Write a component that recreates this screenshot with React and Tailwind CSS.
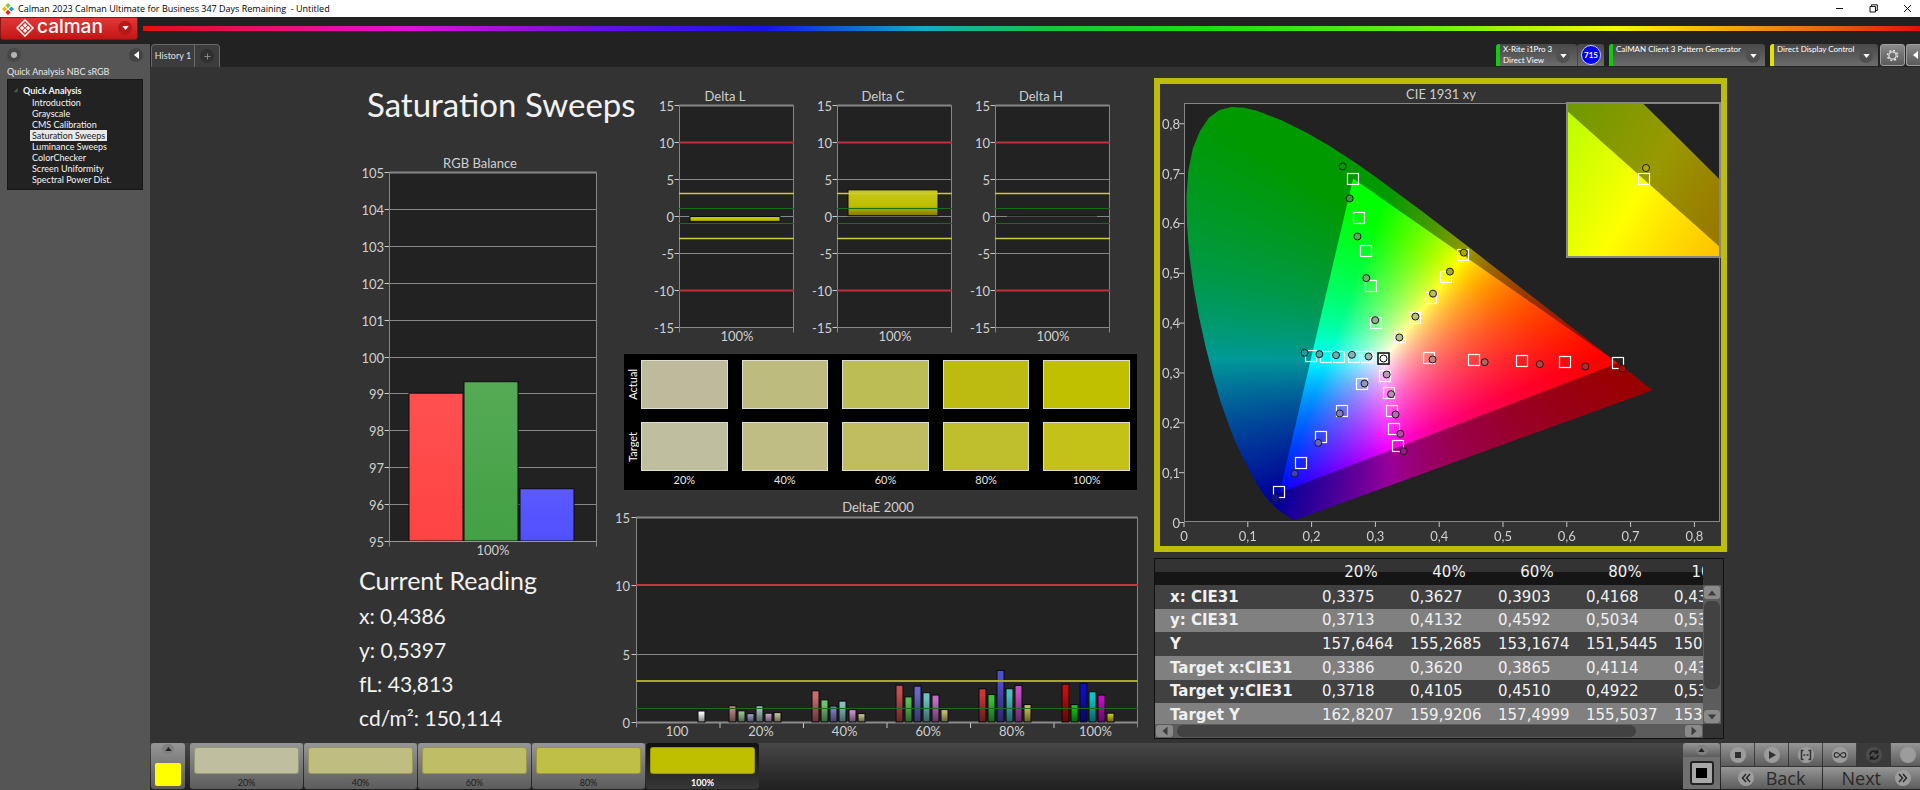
import React, { useLayoutEffect, useRef } from "react";

/* ---------- shared chart helpers ---------- */

const AXIS = "#868686";
const LABEL = "#cfcfcf";

function ChartText({ children, ...rest }) {
  return (
    <text fill={LABEL} className="font-['Lato',sans-serif] text-[13px]" {...rest}>
      {children}
    </text>
  );
}

function Frame({ x0, x1, y0, y1, min, max, step, labelX }) {
  const rows = [];
  for (let v = min; v <= max; v += step) {
    rows.push({ v, y: Math.floor(y1 - ((v - min) / (max - min)) * (y1 - y0)) + 0.5 });
  }
  return (
    <g>
      <rect x={x0} y={y0} width={x1 - x0} height={y1 - y0} fill="#222222" />
      {rows.map(({ v, y }) => (
        <g key={v}>
          <line x1={x0} x2={x1} y1={y} y2={y} stroke={AXIS} strokeWidth={v === max ? 2 : 1} />
          <line x1={x0 - 5} x2={x0} y1={y} y2={y} stroke="#c8c8c8" strokeWidth="1" />
          <ChartText x={labelX} y={y + 5} textAnchor="end">{v}</ChartText>
        </g>
      ))}
      <line x1={x0} x2={x0} y1={y0} y2={y1 + 5} stroke={AXIS} strokeWidth="1" />
      <line x1={x1} x2={x1} y1={y0} y2={y1 + 5} stroke={AXIS} strokeWidth="1" />
    </g>
  );
}

/* ---------- RGB balance ---------- */

function RgbBalance() {
  const y = (v) => 387.5 - (v - 95) * 36.9;
  const bars = [
    { x: 50, v: 99.02, top: "#ff5050", bottom: "#ff4343" },
    { x: 105, v: 99.33, top: "#55ab55", bottom: "#43a043" },
    { x: 161, v: 96.43, top: "#5a5aff", bottom: "#5050ff" },
  ];
  return (
    <svg viewBox="0 0 252 408" className="block w-full" role="img" aria-label="RGB Balance">
      <defs>
        {bars.map((b, i) => (
          <linearGradient key={i} id={`rgb${i}`} x1="0" y1="0" x2="0" y2="1">
            <stop offset="0" stopColor={b.top} />
            <stop offset="1" stopColor={b.bottom} />
          </linearGradient>
        ))}
      </defs>
      <ChartText x="121" y="14" textAnchor="middle">RGB Balance</ChartText>
      <Frame x0={30.5} x1={237.5} y0={18.5} y1={387.5} min={95} max={105} step={1} labelX={25} />
      {bars.map((b, i) => (
        <rect key={i} x={b.x} y={y(b.v)} width="54" height={387 - y(b.v)} fill={`url(#rgb${i})`} stroke="#0a0a0a" />
      ))}
      <line x1="30" x2="238" y1="387.5" y2="387.5" stroke="#999999" strokeWidth="1" />
      <ChartText x="134" y="401" textAnchor="middle">100%</ChartText>
    </svg>
  );
}

/* ---------- Delta L / C / H ---------- */

function DeltaChart({ title, from, to }) {
  const y = (v) => 128.5 - v * 7.4;
  const limits = [
    [10, "#c03038", 2], [3, "#cccc3c", 1.5], [1, "#157015", 1],
    [-1, "#157015", 1], [-3, "#cccc3c", 1.5], [-10, "#c03038", 2],
  ];
  const height = Math.max(y(from) - y(to), 1);
  return (
    <svg viewBox="0 0 158 258" className="block min-w-0 flex-1" role="img" aria-label={title}>
      <defs>
        <linearGradient id={`bar${title.slice(-1)}`} x1="0" y1="0" x2="0" y2="1">
          <stop offset="0" stopColor="#c8c81c" />
          <stop offset="0.6" stopColor="#bfbf00" />
          <stop offset="1" stopColor="#7c7c00" />
        </linearGradient>
      </defs>
      <ChartText x="76" y="13" textAnchor="middle">{title}</ChartText>
      <Frame x0={30.5} x1={144.5} y0={17.5} y1={239.5} min={-15} max={15} step={5} labelX={25} />
      {height > 1 ? (
        <rect x="41" y={y(to)} width="90" height={height} fill={`url(#bar${title.slice(-1)})`} stroke="#0a0a0a" />
      ) : (
        <line x1="42" x2="132" y1="128" y2="128" stroke="#0a0a0a" />
      )}
      {limits.map(([v, color, w]) => (
        <line key={v} x1="30" x2="145" y1={Math.round(y(v)) - 0.5} y2={Math.round(y(v)) - 0.5} stroke={color} strokeWidth={w} />
      ))}
      <ChartText x="88" y="253" textAnchor="middle">100%</ChartText>
    </svg>
  );
}

/* ---------- Actual / target swatches ---------- */

const LEVELS = ["20%", "40%", "60%", "80%", "100%"];

function SwatchRow({ name, colors }) {
  return (
    <div className="flex items-center">
      <div className="flex w-[17px] shrink-0 items-center justify-center">
        <span className="rotate-180 text-[11px] leading-[14px] text-white [writing-mode:vertical-rl]">{name}</span>
      </div>
      <div className="grid flex-1 grid-cols-5 gap-[14px]">
        {colors.map((c, i) => (
          <div key={i} className="h-[49px] border border-[#deded0]" style={{ backgroundColor: c }} />
        ))}
      </div>
    </div>
  );
}

function Swatches() {
  return (
    <div className="ml-[13px] mr-[4px] mt-[8px] flex flex-col gap-[13px] bg-black pb-[4px] pr-[7px] pt-[6px]">
      <SwatchRow name="Actual" colors={["#bdbb9c", "#bdbb7d", "#bdbd55", "#bdbb12", "#c1c000"]} />
      <div>
        <SwatchRow name="Target" colors={["#bfbe9f", "#bfbd84", "#bfbd60", "#bfbe2d", "#c4c119"]} />
        <div className="grid grid-cols-5 gap-[14px] pl-[17px] pt-[3px] text-center text-[11px] leading-[12px] text-[#e6e6e6]">
          {LEVELS.map((l) => <span key={l}>{l}</span>)}
        </div>
      </div>
    </div>
  );
}

/* ---------- DeltaE 2000 ---------- */

const DE_GROUPS = [
  { label: "20%", v: [1.22, 0.85, 0.65, 1.22, 0.68, 0.72], c: ["#bf8585", "#93bf93", "#9494bf", "#a0bfbb", "#bf9cbf", "#bfbb98"] },
  { label: "40%", v: [2.31, 1.65, 1.2, 1.56, 0.94, 0.65], c: ["#c86c70", "#72c076", "#7c7cc4", "#86c0be", "#c08cc4", "#c0bc84"] },
  { label: "60%", v: [2.72, 1.87, 2.65, 2.17, 2, 0.94], c: ["#c84f50", "#54c054", "#6868c8", "#6cc2c2", "#c46cc4", "#c0bc6c"] },
  { label: "80%", v: [2.46, 2.04, 3.8, 2.46, 2.7, 1.31], c: ["#c83638", "#38c038", "#5050cc", "#48c0c0", "#c44cc4", "#c0bc50"] },
  { label: "100%", v: [2.8, 1.31, 2.85, 2.24, 2, 0.68], c: ["#c40c0c", "#0cc40c", "#0c0ccc", "#0cc4c4", "#c40cc4", "#c4c018"] },
];

function DeltaE() {
  const y = (v) => 223.5 - v * 13.72;
  return (
    <svg viewBox="0 0 530 244" className="mt-[9px] block w-full" role="img" aria-label="DeltaE 2000">
      <defs>
        <linearGradient id="shade" x1="0" y1="0" x2="0" y2="1">
          <stop offset="0.2" stopColor="#000" stopOpacity="0" />
          <stop offset="1" stopColor="#000" stopOpacity="0.5" />
        </linearGradient>
      </defs>
      <ChartText x="267" y="13" textAnchor="middle">DeltaE 2000</ChartText>
      <Frame x0={25.5} x1={526.5} y0={18.5} y1={223.5} min={0} max={15} step={5} labelX={19} />
      <line x1="25" x2="527" y1="223.5" y2="223.5" stroke="#8c8c8c" strokeWidth="2" />
      {[1, 2, 3, 4, 5].map((i) => (
        <line key={i} x1={25.5 + i * 83.5} x2={25.5 + i * 83.5} y1="224" y2="229" stroke="#c8c8c8" />
      ))}
      <rect x="87" y="212" width="7" height="11" fill="#f4f4f4" stroke="#0a0a0a" />
      <rect x="87" y="212" width="7" height="11" fill="url(#shade)" />
      <ChartText x="66" y="237" textAnchor="middle">100</ChartText>
      {DE_GROUPS.map((g, gi) => (
        <g key={g.label}>
          {g.v.map((v, i) => {
            const x = Math.round(118 + gi * 83.3 + i * 9.05);
            return (
              <g key={i}>
                <rect x={x} y={y(v)} width="7" height={223 - y(v)} fill={g.c[i]} stroke="#0a0a0a" />
                <rect x={x} y={y(v)} width="7" height={223 - y(v)} fill="url(#shade)" />
              </g>
            );
          })}
          <ChartText x={150 + gi * 83.6} y="237" textAnchor="middle">{g.label}</ChartText>
        </g>
      ))}
      <line x1="25" x2="527" y1="86" y2="86" stroke="#c03840" strokeWidth="2" />
      <line x1="25" x2="527" y1="182" y2="182" stroke="#a8a82c" strokeWidth="2" />
      <line x1="25" x2="527" y1="209.5" y2="209.5" stroke="#1c6a1c" strokeWidth="1" />
    </svg>
  );
}

/* ---------- CIE 1931 chromaticity ---------- */

const LOCUS = [
  [0.1741, 0.005], [0.1714, 0.0051], [0.1644, 0.0109], [0.1566, 0.0177], [0.144, 0.0297], [0.1355, 0.0399],
  [0.1241, 0.0578], [0.1096, 0.0868], [0.0913, 0.1327], [0.0796, 0.1648], [0.0687, 0.2007], [0.0566, 0.2454],
  [0.0454, 0.295], [0.0339, 0.3519], [0.0235, 0.4127], [0.0145, 0.4758], [0.0082, 0.5384], [0.0046, 0.598],
  [0.0039, 0.6548], [0.0068, 0.7065], [0.0139, 0.7502], [0.0248, 0.7848], [0.0389, 0.812], [0.0557, 0.8278],
  [0.0743, 0.8338], [0.0944, 0.8324], [0.1142, 0.8262], [0.1547, 0.8059], [0.1929, 0.7816], [0.2296, 0.7543],
  [0.2658, 0.7243], [0.3016, 0.6923], [0.3731, 0.6245], [0.4441, 0.5547], [0.5125, 0.4866], [0.5752, 0.4242],
  [0.627, 0.3725], [0.6658, 0.334], [0.6915, 0.3083], [0.719, 0.2809], [0.7347, 0.2653],
];
const GAMUT = [[0.68, 0.32], [0.265, 0.69], [0.15, 0.06]];

const TARGETS = [
  [0.265, 0.69], [0.274, 0.611], [0.2846, 0.5455], [0.2928, 0.4755], [0.3014, 0.401],
  [0.3386, 0.3718], [0.362, 0.4105], [0.3865, 0.451], [0.4114, 0.4922], [0.4372, 0.5363],
  [0.3843, 0.3291], [0.4539, 0.3264], [0.5299, 0.3244], [0.5971, 0.3224], [0.68, 0.32],
  [0.2875, 0.3318], [0.2661, 0.332], [0.2435, 0.332], [0.2232, 0.332], [0.1994, 0.3331],
  [0.2788, 0.2776], [0.247, 0.2241], [0.2151, 0.1712], [0.1838, 0.1191], [0.1484, 0.0602],
  [0.3154, 0.2943], [0.3206, 0.2595], [0.3264, 0.2241], [0.3293, 0.1886], [0.3351, 0.1538],
];
const READINGS = [
  [0.2487, 0.7144, "#009900"], [0.2597, 0.6502, "#30a030"], [0.2719, 0.5739, "#55b055"], [0.2858, 0.4903, "#70b070"], [0.2997, 0.406, "#8cb08c"],
  [0.3375, 0.3713, "#bdbb9c"], [0.3627, 0.4132, "#bdbb7d"], [0.3903, 0.4592, "#bdbd55"], [0.4168, 0.5034, "#a8a834"], [0.4386, 0.5415, "#b0a800"],
  [0.3896, 0.3271, "#bf8585"], [0.4713, 0.3217, "#b86060"], [0.5577, 0.3177, "#b84444"], [0.629, 0.313, "#b02c2c"], [0.6875, 0.309, "#b00808"],
  [0.2893, 0.3331, "#9cb8b8"], [0.2632, 0.3365, "#86b4b4"], [0.2383, 0.3358, "#6cb0b0"], [0.2122, 0.3378, "#40b0b0"], [0.189, 0.3405, "#10a0a0"],
  [0.2829, 0.2789, "#9494bf"], [0.2441, 0.2187, "#7c7cc4"], [0.2104, 0.1599, "#6868c0"], [0.1733, 0.0983, "#4040a8"], [0.1432, 0.0495, "#1010a0"],
  [0.3177, 0.297, "#b89cb8"], [0.3246, 0.2575, "#b88cb8"], [0.3316, 0.2167, "#b86cb8"], [0.3391, 0.1779, "#b04cb0"], [0.3443, 0.1431, "#a010a0"],
];

function chromaToRgb(x, y) {
  const yy = Math.max(y, 0.001);
  const X = x / yy;
  const Z = (1 - x - yy) / yy;
  const lin = [
    3.2406 * X - 1.5372 - 0.4986 * Z,
    -0.9689 * X + 1.8758 + 0.0415 * Z,
    0.0557 * X - 0.204 + 1.057 * Z,
  ].map((c) => Math.max(c, 0));
  const peak = Math.max(...lin) || 1;
  return lin.map((c) => Math.round(255 * Math.pow(c / peak, 0.9)));
}

/* Paints the spectral locus; the part outside the gamut triangle is dimmed. */
function ChromaCanvas({ width, height, originX, originY, scaleX, scaleY }) {
  const ref = useRef(null);
  useLayoutEffect(() => {
    const ctx = ref.current.getContext("2d");
    const img = ctx.createImageData(width, height);
    for (let j = 0; j < height; j++) {
      for (let i = 0; i < width; i++) {
        const [r, g, b] = chromaToRgb((i - originX) / scaleX, (originY - j) / scaleY);
        const k = (j * width + i) * 4;
        img.data[k] = r;
        img.data[k + 1] = g;
        img.data[k + 2] = b;
        img.data[k + 3] = 255;
      }
    }
    ctx.putImageData(img, 0, 0);
    const trace = (pts) => {
      pts.forEach(([x, y], n) => {
        const px = originX + x * scaleX;
        const py = originY - y * scaleY;
        if (n) ctx.lineTo(px, py);
        else ctx.moveTo(px, py);
      });
      ctx.closePath();
    };
    ctx.globalCompositeOperation = "source-atop";
    ctx.fillStyle = "rgba(0,0,0,0.4)";
    ctx.beginPath();
    ctx.rect(0, 0, width, height);
    trace(GAMUT);
    ctx.fill("evenodd");
    ctx.globalCompositeOperation = "destination-in";
    ctx.fillStyle = "#000";
    ctx.beginPath();
    trace(LOCUS);
    ctx.fill();
  }, [width, height, originX, originY, scaleX, scaleY]);
  return <canvas ref={ref} width={width} height={height} className="block" />;
}

function CieChart() {
  const px = (x) => 24 + x * 638;
  const py = (y) => 438.5 - y * 498.4;
  const ticks = [0, 1, 2, 3, 4, 5, 6, 7, 8];
  const fmt = (t) => (t === 0 ? "0" : `0,${t}`);
  return (
    <div className="border-[6px] border-[#bdbd0a]">
      <svg viewBox="0 0 561 462" className="block w-full" role="img" aria-label="CIE 1931 xy">
        <ChartText x="281" y="15" textAnchor="middle">CIE 1931 xy</ChartText>
        <rect x="24.5" y="19.5" width="535" height="418" fill="#222222" stroke={AXIS} />
        <foreignObject x="25" y="20" width="534" height="417">
          <ChromaCanvas width={534} height={417} originX={-1} originY={418.5} scaleX={638} scaleY={498.4} />
        </foreignObject>
        {ticks.map((t) => (
          <g key={t}>
            <line x1={px(t / 10)} x2={px(t / 10)} y1="438" y2="443" stroke="#c8c8c8" />
            <line x1="19" x2="24" y1={py(t / 10)} y2={py(t / 10)} stroke="#c8c8c8" />
            <ChartText x={px(t / 10)} y="457" textAnchor="middle">{fmt(t)}</ChartText>
            <ChartText x="20" y={py(t / 10) + 5} textAnchor="end">{fmt(t)}</ChartText>
          </g>
        ))}
        {TARGETS.map(([x, y], i) => (
          <rect key={i} x={Math.round(px(x)) - 5.5} y={Math.round(py(y)) - 5.5} width="11" height="11" fill="none" stroke="#ffffff" strokeWidth="1.2" />
        ))}
        {READINGS.map(([x, y, c], i) => (
          <circle key={i} cx={px(x)} cy={py(y)} r="3.5" fill={c} stroke="#1a1a1a" />
        ))}
        <rect x={px(0.3127) - 5.5} y={py(0.329) - 5.5} width="11" height="11" fill="#fff" stroke="#000" strokeWidth="1.5" />
        <circle cx={px(0.3127)} cy={py(0.329)} r="3.5" fill="#fff" stroke="#000" />
        <rect x="407" y="19" width="153" height="154" fill="#222222" stroke={AXIS} strokeWidth="2" />
        <foreignObject x="408" y="20" width="151" height="152">
          <ChromaCanvas width={151} height={152} originX={76 - 0.4372 * 3000} originY={76 + 0.5363 * 3000} scaleX={3000} scaleY={3000} />
        </foreignObject>
        <rect x="478.5" y="89.5" width="11" height="11" fill="none" stroke="#ffffff" strokeWidth="1.2" />
        <circle cx="486" cy="84" r="3.5" fill="#b0a800" stroke="#1a1a1a" />
      </svg>
    </div>
  );
}

/* ---------- Data table ---------- */

const ROWS = [
  ["x: CIE31", "0,3375", "0,3627", "0,3903", "0,4168", "0,4386"],
  ["y: CIE31", "0,3713", "0,4132", "0,4592", "0,5034", "0,5397"],
  ["Y", "157,6464", "155,2685", "153,1674", "151,5445", "150,1140"],
  ["Target x:CIE31", "0,3386", "0,3620", "0,3865", "0,4114", "0,4372"],
  ["Target y:CIE31", "0,3718", "0,4105", "0,4510", "0,4922", "0,5363"],
  ["Target Y", "162,8207", "159,9206", "157,4999", "155,5037", "153,8210"],
];

function ScrollButton({ d, label, className }) {
  return (
    <button type="button" aria-label={label} className={`flex shrink-0 items-center justify-center rounded-[3px] bg-[#8a8a8a] ${className}`}>
      <svg viewBox="0 0 12 12" className="h-[10px] w-[10px]"><path d={d} fill="#3c3c3c" /></svg>
    </button>
  );
}

function DataTable() {
  return (
    <div className="mr-[3px] mt-[6px] flex flex-col border border-[#111] bg-[#333]">
      <div className="flex h-[165px]">
        <div className="min-w-0 flex-1 overflow-hidden">
          <table className="h-[168px] w-[602px] table-fixed border-collapse font-['DejaVu_Sans',sans-serif] text-[15px] leading-[20px] text-[#f0f0f0]">
            <thead>
              <tr className="h-[26px] bg-linear-to-b from-[#333333] from-50% to-[#151515] to-50%">
                <th className="w-[162px]" aria-label="Quantity" />
                {LEVELS.map((l) => <th key={l} className="p-0 text-center font-normal">{l}</th>)}
              </tr>
            </thead>
            <tbody>
              {ROWS.map((r) => (
                <tr key={r[0]} className="bg-[#414141] even:bg-[#808080]">
                  <th scope="row" className="py-0 pl-[15px] text-left font-bold">{r[0]}</th>
                  {r.slice(1).map((v, i) => <td key={i} className="py-0 pl-[5px]">{v}</td>)}
                </tr>
              ))}
            </tbody>
          </table>
        </div>
        <div className="mr-[2px] mt-[26px] flex w-[18px] flex-col bg-[#5c5c5c]">
          <ScrollButton label="Scroll up" d="M6 3 L11 9 H1 Z" className="m-[1px] h-[13px]" />
          <div className="mx-[1px] mt-[1px] h-[88px] rounded-[6px] bg-[#424242]" />
          <ScrollButton label="Scroll down" d="M6 9 L11 3 H1 Z" className="m-[1px] mt-auto h-[13px]" />
        </div>
      </div>
      <div className="mr-[20px] flex h-[14px] items-stretch bg-[#5c5c5c]">
        <ScrollButton label="Scroll left" d="M3 6 L9 1 V11 Z" className="m-px w-[17px]" />
        <div className="flex flex-1">
          <div className="m-px ml-[3px] w-[90%] rounded-[6px] bg-[#424242]" />
        </div>
        <ScrollButton label="Scroll right" d="M9 6 L3 1 V11 Z" className="m-px w-[17px]" />
      </div>
    </div>
  );
}

/* ---------- Window chrome ---------- */

function TitleBar() {
  return (
    <div className="flex h-[17px] items-center bg-white pl-[2px] font-['Open_Sans',sans-serif] text-[9px] leading-[14px] text-black">
      <svg viewBox="0 0 12 12" className="mr-[4px] h-[12px] w-[12px]">
        <path d="M6 0 L8.6 2.6 L6 5.2 L3.4 2.6 Z" fill="#8cc63f" />
        <path d="M9.4 3.4 L12 6 L9.4 8.6 L6.8 6 Z" fill="#19a0d8" />
        <path d="M6 6.8 L8.6 9.4 L6 12 L3.4 9.4 Z" fill="#e0261f" />
        <path d="M2.6 3.4 L5.2 6 L2.6 8.6 L0 6 Z" fill="#f5b800" />
      </svg>
      <span className="whitespace-pre">Calman 2023 Calman Ultimate for Business 347 Days Remaining  - Untitled</span>
      <div className="ml-auto flex items-center gap-[25px] pr-[8px]">
        <button type="button" aria-label="Minimize">
          <svg viewBox="0 0 9 9" className="block h-[9px] w-[9px]" fill="none" stroke="#111"><path d="M1 4.5 H8" /></svg>
        </button>
        <button type="button" aria-label="Restore">
          <svg viewBox="0 0 9 9" className="block h-[9px] w-[9px]" fill="none" stroke="#111"><path d="M1 2.5 H6.5 V8 H1 Z M2.5 2.5 V0.8 H8.3 V6.5 H6.5" /></svg>
        </button>
        <button type="button" aria-label="Close">
          <svg viewBox="0 0 9 9" className="block h-[9px] w-[9px]" fill="none" stroke="#111"><path d="M1 1 L8 8 M8 1 L1 8" /></svg>
        </button>
      </div>
    </div>
  );
}

function Round({ children, className = "" }) {
  return (
    <span className={`flex h-[14px] w-[14px] shrink-0 items-center justify-center rounded-full ${className}`}>
      {children}
    </span>
  );
}

function Caret() {
  return <svg viewBox="0 0 8 5" className="h-[4px] w-[7px]"><path d="M0 0 H8 L4 5 Z" fill="#fff" /></svg>;
}

function LeftArrow() {
  return <svg viewBox="0 0 5 8" className="h-[8px] w-[5px]"><path d="M5 0 V8 L0 4 Z" fill="#fff" /></svg>;
}

function Brand() {
  return (
    <div className="flex h-[27px] items-start">
      <button type="button" className="flex h-[23px] w-[138px] shrink-0 items-center rounded-b-[3px] border border-[#8c1515] bg-linear-to-b from-[#e03636] to-[#c41414] pb-[2px] pl-[15px] text-white">
        <svg viewBox="0 0 18 18" className="mr-[3px] h-[18px] w-[18px]" fill="none" stroke="#fff" strokeWidth="1.5">
          <path d="M9 1 L17 9 L9 17 L1 9 Z" />
          <path d="M9 4 L11.2 6.2 L9 8.4 L6.8 6.2 Z M12 6.8 L14.2 9 L12 11.2 L9.8 9 Z M9 9.6 L11.2 11.8 L9 14 L6.8 11.8 Z M6 6.8 L8.2 9 L6 11.2 L3.8 9 Z" fill="#fff" stroke="none" />
        </svg>
        <span className="pb-[2px] font-['Inter',sans-serif] text-[19px] font-medium leading-[19px]">calman</span>
        <Round className="ml-auto mr-[5px] bg-[#b81818]"><Caret /></Round>
      </button>
      <div className="ml-[5px] mt-[9px] h-[5px] flex-1 bg-[linear-gradient(to_right,#e01010_0%,#e8107c_8%,#e010d8_15%,#7010e0_25%,#1414e8_35%,#10b0c0_44%,#10c840_51%,#18e010_60%,#70f010_73%,#f8f800_83%,#f0a010_90%,#e86010_95%,#e01010_100%)]" />
    </div>
  );
}

const PAGES = ["Introduction", "Grayscale", "CMS Calibration", "Saturation Sweeps", "Luminance Sweeps", "ColorChecker", "Screen Uniformity", "Spectral Power Dist."];

function Sidebar() {
  return (
    <aside className="w-[150px] shrink-0 bg-[#555555] px-[7px] text-[#e8e8e8]">
      <div className="flex h-[21px] items-center justify-between">
        <Round className="bg-[#484848]"><span className="h-[6px] w-[6px] rounded-full bg-[#b4b4b4]" /></Round>
        <button type="button" aria-label="Collapse sidebar"><Round className="bg-[#444]"><LeftArrow /></Round></button>
      </div>
      <h2 className="whitespace-nowrap text-[9px] leading-[14px]">Quick Analysis NBC sRGB</h2>
      <nav className="border border-[#181818] bg-[#222222] pb-[4px] pl-[5px] pt-[5px] text-[9px] leading-[11px] text-[#f4f4f4]">
        <div className="flex items-center gap-[4px] pb-px font-bold">
          <svg viewBox="0 0 6 6" className="h-[5px] w-[6px]"><path d="M5 0 V5 H0 Z" fill="#555" /></svg>
          Quick Analysis
        </div>
        <ul className="pl-[17px]">
          {PAGES.map((p) => (
            <li key={p}>
              <a href="#" className={p === "Saturation Sweeps" ? "inline-block bg-[#e8e8e8] px-[2px] text-[#222]" : "inline-block px-[2px]"}>{p}</a>
            </li>
          ))}
        </ul>
      </nav>
    </aside>
  );
}

const PILL = "flex h-[22px] rounded-t-[3px] bg-linear-to-b from-[#484848] to-[#6c6c6c] text-left text-[8px] leading-[11px] text-[#ffffff]";

function TabStrip() {
  return (
    <div className="flex h-[23px] items-end bg-[#222222]">
      <div className="ml-[1px] flex h-[23px] rounded-t-[4px] border border-b-0 border-[#6a6a6a] bg-[#3c3c3c] text-[#e0e0e0]">
        <button type="button" className="w-[43px] border-r border-[#6a6a6a] text-[9px] whitespace-nowrap">History 1</button>
        <button type="button" aria-label="Add history" className="flex w-[24px] items-center justify-center">
          <Round className="bg-[#303030]">
            <svg viewBox="0 0 8 8" className="h-[7px] w-[7px]" stroke="#909090"><path d="M4 0.5 V7.5 M0.5 4 H7.5" /></svg>
          </Round>
        </button>
      </div>
      <div className="ml-auto flex items-end pb-px">
        <button type="button" className={`${PILL} w-[81px] border-l-4 border-[#14c814]`}>
          <span className="flex-1 whitespace-nowrap pl-[3px]">X-Rite i1Pro 3<br />Direct View</span>
          <Round className="mr-[7px] mt-[5px] bg-[#505050]"><Caret /></Round>
        </button>
        <div className={`${PILL} w-[27px] items-center justify-center border-l border-[#444]`}>
          <span className="flex h-[20px] w-[20px] items-center justify-center rounded-full border border-[#c8c8ff] bg-[#0000f0] text-[8px] font-bold text-white">715</span>
        </div>
        <button type="button" className={`${PILL} ml-[5px] w-[156px] border-l-4 border-[#14c814]`}>
          <span className="flex-1 whitespace-nowrap pl-[3px]">CalMAN Client 3 Pattern Generator</span>
          <Round className="mr-[5px] mt-[5px] bg-[#505050]"><Caret /></Round>
        </button>
        <button type="button" className={`${PILL} ml-[5px] w-[108px] border-l-4 border-[#e0e010]`}>
          <span className="flex-1 whitespace-nowrap pl-[3px]">Direct Display Control</span>
          <Round className="mr-[5px] mt-[5px] bg-[#505050]"><Caret /></Round>
        </button>
        <button type="button" aria-label="Settings" className="ml-[2px] flex h-[22px] w-[25px] items-center justify-center rounded-[3px] border border-[#a0a0a0] bg-linear-to-b from-[#8a8a8a] to-[#5a5a5a]">
          <svg viewBox="0 0 16 16" className="h-[13px] w-[13px]" fill="none" stroke="#e0e0e0">
            <circle cx="8" cy="8" r="4.5" strokeWidth="1.5" />
            <circle cx="8" cy="8" r="6.2" strokeWidth="1.8" strokeDasharray="2.43 2.44" />
          </svg>
        </button>
        <button type="button" aria-label="Expand panel" className="ml-px flex h-[22px] w-[14px] items-center justify-end rounded-l-[3px] border border-r-0 border-[#a0a0a0] bg-linear-to-b from-[#8a8a8a] to-[#5a5a5a] pr-[2px]">
          <LeftArrow />
        </button>
      </div>
    </div>
  );
}

/* ---------- Bottom bar ---------- */

const METAL = "bg-linear-to-b from-[#969696] to-[#5c5c5c]";
const STEPS = ["#bfbf9f", "#bfbd80", "#bfbe66", "#bfbf48", "#bfbf00"];

function Dial({ children, className = "bg-[#9c9c9c]" }) {
  return (
    <span className={`flex h-[16px] w-[16px] shrink-0 items-center justify-center rounded-full ${className}`}>
      <svg viewBox="0 0 16 16" className="h-[16px] w-[16px]" fill="none" stroke="currentColor" strokeWidth="1.5">{children}</svg>
    </span>
  );
}

function UpDial() {
  return (
    <span className="flex h-[10px] w-[12px] items-center justify-center rounded-full bg-[#808080]">
      <svg viewBox="0 0 8 5" className="h-[4px] w-[7px]"><path d="M0 5 H8 L4 0 Z" fill="#222" /></svg>
    </span>
  );
}

function BottomBar() {
  const controls = [
    ["Stop", <rect x="5" y="5" width="6" height="6" fill="currentColor" stroke="none" />],
    ["Play", <path d="M5 4 L12 8 L5 12 Z" fill="currentColor" stroke="none" />],
    ["Range", <path d="M5.5 3.5 H3.5 V12.5 H5.5 M10.5 3.5 H12.5 V12.5 H10.5 M5.5 8 H7.3 M8.7 8 H10.5" />],
    ["Loop", <path strokeWidth="1.2" d="M8 8 C6.5 5.8 5.6 5.6 4.6 5.6 A2.4 2.4 0 0 0 4.6 10.4 C5.6 10.4 6.5 10.2 8 8 C9.5 5.8 10.4 5.6 11.4 5.6 A2.4 2.4 0 0 1 11.4 10.4 C10.4 10.4 9.5 10.2 8 8 Z" />],
    ["Refresh", <path d="M4 8 A4 4 0 0 1 11 5.3 M12 8 A4 4 0 0 1 5 10.7 M11.5 2.8 V6 H8.3 M4.5 13.2 V10 H7.7" />],
    ["Extra", null],
  ];
  return (
    <footer className="flex h-[47px] items-stretch bg-linear-to-b from-[#484848] to-[#202020] pb-px pl-[1px]">
      <button type="button" aria-label="Current color" className={`flex w-[34px] flex-col items-center rounded-[3px] pt-[1px] ${METAL}`}>
        <UpDial />
        <span className="mt-[9px] h-[23px] w-[26px] rounded-[2px] bg-[#ffff00]" />
      </button>
      <div className="ml-[5px] flex gap-px">
        {LEVELS.map((l, i) => (
          <button
            key={l}
            type="button"
            className={`flex w-[113px] flex-col items-center rounded-[3px] pt-[4px] text-[9px] leading-[12px] ${i === 4 ? "bg-linear-to-b from-[#101010] to-[#383838] font-bold text-white" : `${METAL} text-[#1c1c1c]`}`}
          >
            <span className="mb-[3px] h-[27px] w-[105px] rounded-[3px] border border-black/20" style={{ backgroundColor: STEPS[i] }} />
            {l}
          </button>
        ))}
      </div>
      <div className="ml-auto flex w-[37px] flex-col">
        <button type="button" aria-label="Raise" className={`flex h-[14px] items-center justify-center rounded-t-[3px] ${METAL}`}><UpDial /></button>
        <button type="button" aria-label="Pattern window" className="flex flex-1 items-center justify-center bg-[#707070]">
          <span className="flex h-[24px] w-[24px] items-center justify-center rounded-[3px] border-2 border-[#222] bg-[#a8a8a8]">
            <span className="h-[10px] w-[11px] bg-black" />
          </span>
        </button>
      </div>
      <div className="flex w-[200px] flex-col gap-px overflow-hidden pl-px">
        <div className="flex h-[23px] gap-px">
          {controls.map(([name, icon]) => (
            <button key={name} type="button" aria-label={name} className={`flex w-[33px] shrink-0 items-center justify-center ${name === "Refresh" ? "bg-[#3a3a3a] text-[#1c1c1c]" : `${METAL} text-[#303030]`}`}>
              <Dial className={name === "Refresh" ? "bg-[#4c4c4c]" : "bg-[#9c9c9c]"}>{icon}</Dial>
            </button>
          ))}
        </div>
        <div className="flex flex-1 gap-px font-['Open_Sans',sans-serif] text-[18px] leading-[20px] text-[#2a2a2a]">
          <button type="button" className={`flex w-[101px] items-center justify-center gap-[12px] ${METAL}`}>
            <Dial><path d="M8 4 L4.5 8 L8 12 M12 4 L8.5 8 L12 12" /></Dial>Back
          </button>
          <button type="button" className={`flex flex-1 items-center justify-end gap-[14px] pr-[9px] ${METAL}`}>
            Next<Dial><path d="M8 4 L11.5 8 L8 12 M4 4 L7.5 8 L4 12" /></Dial>
          </button>
        </div>
      </div>
    </footer>
  );
}

/* ---------- Page ---------- */

export default function App() {
  return (
    <div className="flex min-h-screen flex-col bg-[#222222] font-['Lato',sans-serif]">
      <TitleBar />
      <Brand />
      <div className="flex flex-1">
        <Sidebar />
        <div className="flex min-w-0 flex-1 flex-col bg-[#333333]">
          <TabStrip />
          <main className="grid flex-1 grid-cols-[209fr_252fr_530fr_13fr_573fr_193fr] items-start">
            <section className="col-start-2 min-w-0 text-[#f2f2f2]">
              <h1 className="whitespace-nowrap pb-[30px] pl-[8px] pt-[17px] text-[33px] leading-[40px]">Saturation Sweeps</h1>
              <RgbBalance />
              <h2 className="pt-[3px] text-[25px] leading-[30px]">Current Reading</h2>
              <div className="pt-[4px] text-[21px] leading-[34px]">
                <p>x: 0,4386</p>
                <p>y: 0,5397</p>
                <p>fL: 43,813</p>
                <p>cd/m²: 150,114</p>
              </div>
            </section>
            <section className="min-w-0 pt-[21px]">
              <div className="flex pl-[38px] pr-[18px]">
                <DeltaChart title="Delta L" from={-0.7} to={0} />
                <DeltaChart title="Delta C" from={0.1} to={3.6} />
                <DeltaChart title="Delta H" from={0} to={0} />
              </div>
              <Swatches />
              <DeltaE />
            </section>
            <section className="col-start-5 min-w-0 pt-[11px]">
              <CieChart />
              <DataTable />
            </section>
          </main>
          <BottomBar />
        </div>
      </div>
    </div>
  );
}
